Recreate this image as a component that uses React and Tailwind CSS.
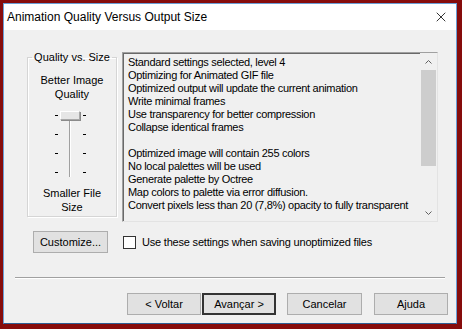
import { X } from 'lucide-react';

const lines = [
  'Standard settings selected, level 4',
  'Optimizing for Animated GIF file',
  'Optimized output will update the current animation',
  'Write minimal frames',
  'Use transparency for better compression',
  'Collapse identical frames',
  '',
  'Optimized image will contain 255 colors',
  'No local palettes will be used',
  'Generate palette by Octree',
  'Map colors to palette via error diffusion.',
  'Convert pixels less than 20 (7,8%) opacity to fully transparent',
];

const font = { fontFamily: '"Liberation Sans", Arial, sans-serif' };

const WinButton = ({ children, primary, className = '' }) => (
  <button
    className={`h-[22px] w-[74px] bg-[#e1e1e1] text-[11px] text-black border ${
      primary ? 'border-[#333333] shadow-[inset_0_0_0_1px_#333333]' : 'border-[#adadad]'
    } ${className}`}
  >
    {children}
  </button>
);

const App = () => {
  return (
    <div className="w-[462px] h-[329px] bg-[#860c0c] pt-[3px] pl-[3px] pr-[5px] pb-[5px]" style={font}>
      <div className="w-full h-full flex flex-col border border-[#6a9ed6] border-b-[#2f5f93]">
        {/* title bar */}
        <div className="h-[26px] bg-white flex items-center justify-between pl-[3px] pr-[7px]">
          <span className="text-[12px] text-black">Animation Quality Versus Output Size</span>
          <X className="w-[16px] h-[16px] text-black" strokeWidth={1.2} />
        </div>

        <div className="flex-1 bg-[#f0f0f0] flex flex-col text-black">
          <div className="flex items-start pl-[23px] pt-[22px]">
            {/* group box */}
            <fieldset className="w-[90px] h-[166px] mt-[-1px] border border-[#d5d5d5] shadow-[1px_1px_0_#ffffff,inset_1px_1px_0_#ffffff] flex flex-col items-center">
              <legend className="mx-auto px-[2px] text-[11px] leading-[13px]">Quality vs. Size</legend>
              <div className="mt-[9px] text-[11px] leading-[14px] text-center">
                Better Image
                <br />
                Quality
              </div>
              <div className="relative w-[34px] h-[66px] mt-[10px]">
                <div className="absolute left-[14px] top-[4px] w-[2px] h-[62px] border-l border-[#a0a0a0] border-r border-r-white" />
                {[4, 23, 42, 61].map((t) => (
                  <div key={t} className="contents">
                    <div className="absolute left-0 w-[3px] h-px bg-black" style={{ top: t }} />
                    <div className="absolute left-[28px] w-[3px] h-px bg-black" style={{ top: t }} />
                  </div>
                ))}
                <div className="absolute left-[5px] top-0 w-[20px] h-[9px] bg-[#e6e6e6] border border-[#a8a8a8] border-t-white border-l-white shadow-[1px_1px_0_#8a8a8a]" />
              </div>
              <div className="mt-[9px] text-[11px] leading-[14px] text-center">
                Smaller File
                <br />
                Size
              </div>
            </fieldset>

            {/* info text box */}
            <div className="ml-[5px] w-[316px] h-[170px] border border-[#a0a0a0] border-r-[#e3e3e3] border-b-[#e3e3e3] flex">
              <div className="flex-1 border-t border-l border-[#696969] pl-[4px] pt-[2px]">
                {lines.map((l, i) => (
                  <div key={i} className="text-[11px] leading-[13px] h-[13px] whitespace-nowrap tracking-[-0.3px]">
                    {l}
                  </div>
                ))}
              </div>
              <div className="w-[17px] flex flex-col items-center bg-[#f0f0f0] pt-[1px]">
                <div className="h-[16px] w-full flex items-center justify-center">
                  <svg width="7" height="4" viewBox="0 0 7 4">
                    <path d="M0.5 3.5 L3.5 0.5 L6.5 3.5" fill="none" stroke="#606060" strokeWidth="1" />
                  </svg>
                </div>
                <div className="w-[15px] h-[96px] bg-[#cdcdcd]" />
                <div className="flex-1" />
                <div className="h-[16px] w-full flex items-center justify-center">
                  <svg width="7" height="4" viewBox="0 0 7 4">
                    <path d="M0.5 0.5 L3.5 3.5 L6.5 0.5" fill="none" stroke="#606060" strokeWidth="1" />
                  </svg>
                </div>
              </div>
            </div>
          </div>

          {/* customize row */}
          <div className="flex items-center pl-[29px] mt-[9px]">
            <button className="h-[22px] w-[75px] bg-[#e1e1e1] border border-[#adadad] text-[11px]">Customize...</button>
            <div className="ml-[15px] w-[13px] h-[13px] bg-white border border-[#333333]" />
            <span className="ml-[6px] text-[11px] tracking-[-0.2px]">Use these settings when saving unoptimized files</span>
          </div>

          {/* separator */}
          <div className="mx-[11px] mt-[24px] h-[2px] border-t border-[#a0a0a0] border-b border-b-white" />

          {/* bottom buttons */}
          <div className="flex pl-[123px] mt-[14px]">
            <WinButton>&lt; Voltar</WinButton>
            <WinButton primary className="ml-px">Avançar &gt;</WinButton>
            <WinButton className="ml-[11px] w-[75px]">Cancelar</WinButton>
            <WinButton className="ml-[12px]">Ajuda</WinButton>
          </div>
        </div>
      </div>
    </div>
  );
};

export default App;
